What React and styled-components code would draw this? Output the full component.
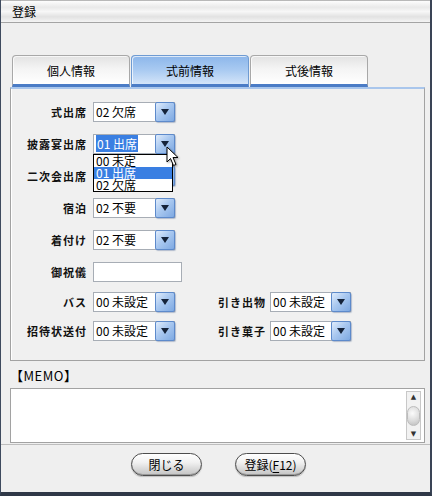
import styled, { createGlobalStyle } from "styled-components";

const GlobalStyle = createGlobalStyle`
	html, body {
		margin: 0;
		padding: 0;
		background: #efefef;
	}
	* {
		box-sizing: border-box;
	}
`

const JP = `"Noto Sans CJK JP", "Noto Sans", sans-serif`

// row 3 sits under the open list, so its value is not drawn
const rows = [
	{ label: "式出席", value: "02 欠席", mt: 0 },
	{ label: "披露宴出席", value: "01 出席", mt: 12, open: true },
	{ label: "二次会出席", value: "", mt: 12 },
	{ label: "宿泊", value: "02 不要", mt: 12 },
	{ label: "着付け", value: "02 不要", mt: 12 },
	{ label: "御祝儀", input: true, mt: 12 },
	{ label: "バス", value: "00 未設定", mt: 10, right: { label: "引き出物", value: "00 未設定" } },
	{ label: "招待状送付", value: "00 未設定", mt: 9, right: { label: "引き菓子", value: "00 未設定" } },
]

const options = ["00 未定", "01 出席", "02 欠席"]

const Arrow = () => (
	<svg width="8" height="6" viewBox="0 0 8 6">
		<polygon points="0,0 8,0 4,6" fill="#15233a" />
	</svg>
)

const Cursor = () => (
	<svg width="14" height="21" viewBox="0 0 14 21">
		<path d="M1,1 L1,16 L4.5,12.5 L7.5,19.5 L10,18.5 L7,11.5 L12,11.5 Z" fill="#fff" stroke="#000" strokeWidth="1" strokeLinejoin="round" />
	</svg>
)

const Select = ({ value, width = 82, open }) => (
	<SelectBox $w={width}>
		<SelectText>{open ? <Picked>{value}</Picked> : value}</SelectText>
		<DropButton><Arrow /></DropButton>
		{open && (
			<>
				<OptionList>
					{options.map((o) => (
						<Option key={o} $on={o === value}>{o}</Option>
					))}
				</OptionList>
				<CursorWrap><Cursor /></CursorWrap>
			</>
		)}
	</SelectBox>
)

const App = () => {
	return (
		<Window>
			<GlobalStyle />
			<TitleBar>登録</TitleBar>
			<Content>
				<TabRow>
					<Tab>個人情報</Tab>
					<Tab $active>式前情報</Tab>
					<Tab>式後情報</Tab>
				</TabRow>
				<Panel>
					{rows.map((r) => (
						<Row key={r.label} $mt={r.mt}>
							<Label>{r.label}</Label>
							{r.input ? <TextBox /> : <Select value={r.value} open={r.open} />}
							{r.right && (
								<>
									<Label $w={95} $pr={4}>{r.right.label}</Label>
									<Select value={r.right.value} width={81} />
								</>
							)}
						</Row>
					))}
				</Panel>
				<MemoLabel>【MEMO】</MemoLabel>
				<Memo>
					<ScrollBar>
						<ScrollArrow>▲</ScrollArrow>
						<Thumb />
						<ScrollArrow>▼</ScrollArrow>
					</ScrollBar>
				</Memo>
			</Content>
			<Footer>
				<PillButton>閉じる</PillButton>
				<PillButton>登録(<u>F</u>12)</PillButton>
			</Footer>
		</Window>
	)
}

const Window = styled.div`
	width: 432px;
	height: 496px;
	display: flex;
	flex-direction: column;
	background: #efefef;
	border-left: 1px solid #3e4a5e;
	border-right: 2px solid #3a4456;
	border-bottom: 4px solid #2f3847;
	font-family: ${JP};
	color: #000;
`

const TitleBar = styled.div`
	height: 23px;
	padding-left: 11px;
	display: flex;
	align-items: center;
	font-size: 12px;
	border-top: 1px solid #b8b8b8;
	border-bottom: 1px solid #a4a4a4;
	background: linear-gradient(#fdfdfd 0%, #e9e9e9 30%, #f7f7f7 50%, #e2e2e2 75%, #f4f4f4 100%);
`

const Content = styled.div`
	padding: 0 5px 0 9px;
`

const TabRow = styled.div`
	display: flex;
	gap: 1px;
	margin-top: 32px;
	padding-left: 2px;
`

const Tab = styled.div`
	width: 118px;
	height: 32px;
	display: flex;
	align-items: center;
	justify-content: center;
	padding-top: 1px;
	font-size: 12px;
	border: 1px solid ${(p) => (p.$active ? "#6f9bd2" : "#a8a8a8")};
	border-bottom: 3px solid #4b7cc6;
	border-radius: 4px 4px 0 0;
	background: ${(p) =>
		p.$active
			? "linear-gradient(#8cb6ea 0%, #a9caf1 50%, #d3e4f9 100%)"
			: "linear-gradient(#e2e2e2 0%, #f4f4f4 45%, #ffffff 100%)"};
	box-shadow: inset 1px 1px 0 rgba(255, 255, 255, 0.7);
`

const Panel = styled.div`
	height: 274px;
	padding: 13px 0 0;
	border: 1px solid #a2a2a2;
	border-top: 2px solid #a9c6ec;
	background: #f0f0f0;
	box-shadow: inset 1px 0 0 #fff;
`

const Row = styled.div`
	display: flex;
	align-items: center;
	height: 20px;
	margin-top: ${(p) => p.$mt}px;
`

const Label = styled.div`
	width: ${(p) => p.$w || 82}px;
	padding-right: ${(p) => p.$pr || 6}px;
	text-align: right;
	font-size: 11px;
	font-weight: 700;
	letter-spacing: 1px;
	white-space: nowrap;
	color: #111;
`

const SelectBox = styled.div`
	position: relative;
	width: ${(p) => p.$w}px;
	height: 20px;
	display: flex;
	background: #fff;
	border: 1px solid #a7adb5;
`

const SelectText = styled.div`
	flex: 1;
	padding-left: 2px;
	font-size: 12px;
	line-height: 18px;
	white-space: nowrap;
	overflow: hidden;
`

const Picked = styled.span`
	background: #3a7fe2;
	color: #fff;
	padding: 0 1px;
`

const DropButton = styled.div`
	width: 20px;
	margin: -1px -1px -1px 0;
	display: flex;
	align-items: center;
	justify-content: center;
	border: 1px solid #5d8acb;
	border-radius: 2px;
	background: linear-gradient(135deg, #e0ecfb 0%, #a9c8f0 45%, #7ea9e2 100%);
	box-shadow: 1px 1px 1px rgba(60, 90, 140, 0.35);
`

const OptionList = styled.div`
	position: absolute;
	top: 19px;
	left: -1px;
	width: 80px;
	background: #fff;
	border: 1px solid #000;
	z-index: 5;
`

const Option = styled.div`
	height: 12px;
	padding-left: 2px;
	font-size: 12px;
	line-height: 12px;
	background: ${(p) => (p.$on ? "#3a7fe2" : "#fff")};
	color: ${(p) => (p.$on ? "#fff" : "#000")};
`

const CursorWrap = styled.div`
	position: absolute;
	left: 72px;
	top: 11px;
	z-index: 6;
	filter: drop-shadow(1px 1px 1px rgba(0, 0, 0, 0.35));
`

const TextBox = styled.div`
	width: 89px;
	height: 20px;
	background: #fff;
	border: 1px solid #a7adb5;
`

const MemoLabel = styled.div`
	height: 27px;
	display: flex;
	align-items: flex-end;
	padding-bottom: 3px;
	font-size: 13px;
	letter-spacing: 0.5px;
`

const Memo = styled.div`
	height: 55px;
	display: flex;
	justify-content: flex-end;
	padding: 2px 3px 2px 0;
	background: #fff;
	border: 1px solid #a2a2a2;
`

const ScrollBar = styled.div`
	width: 15px;
	display: flex;
	flex-direction: column;
	align-items: center;
	justify-content: space-between;
	background: #f2f2f2;
	border: 1px solid #c8c8c8;
`

const ScrollArrow = styled.div`
	font-size: 7px;
	line-height: 10px;
	color: #333;
	font-family: "DejaVu Sans", sans-serif;
`

const Thumb = styled.div`
	width: 13px;
	height: 20px;
	border-radius: 7px;
	border: 1px solid #bcbcbc;
	background: radial-gradient(circle at 40% 35%, #fbfbfb 0%, #dcdcdc 55%, #bdbdbd 100%);
`

const Footer = styled.div`
	flex: 1;
	margin-top: 1px;
	display: flex;
	justify-content: center;
	align-items: flex-start;
	gap: 33px;
	padding: 8px 0 0 6px;
	border-top: 1px solid #bdbdbd;
`

const PillButton = styled.div`
	width: 71px;
	height: 23px;
	display: flex;
	align-items: center;
	justify-content: center;
	font-size: 12px;
	border: 1px solid #4d4d4d;
	border-radius: 12px;
	background: linear-gradient(#ffffff 0%, #f1f1f1 40%, #d6d6d6 75%, #c4c4c4 100%);
	box-shadow: inset 0 -1px 0 #9a9a9a, 0 1px 1px rgba(0, 0, 0, 0.2);

	u {
		text-underline-offset: 2px;
	}
`

export default App;
